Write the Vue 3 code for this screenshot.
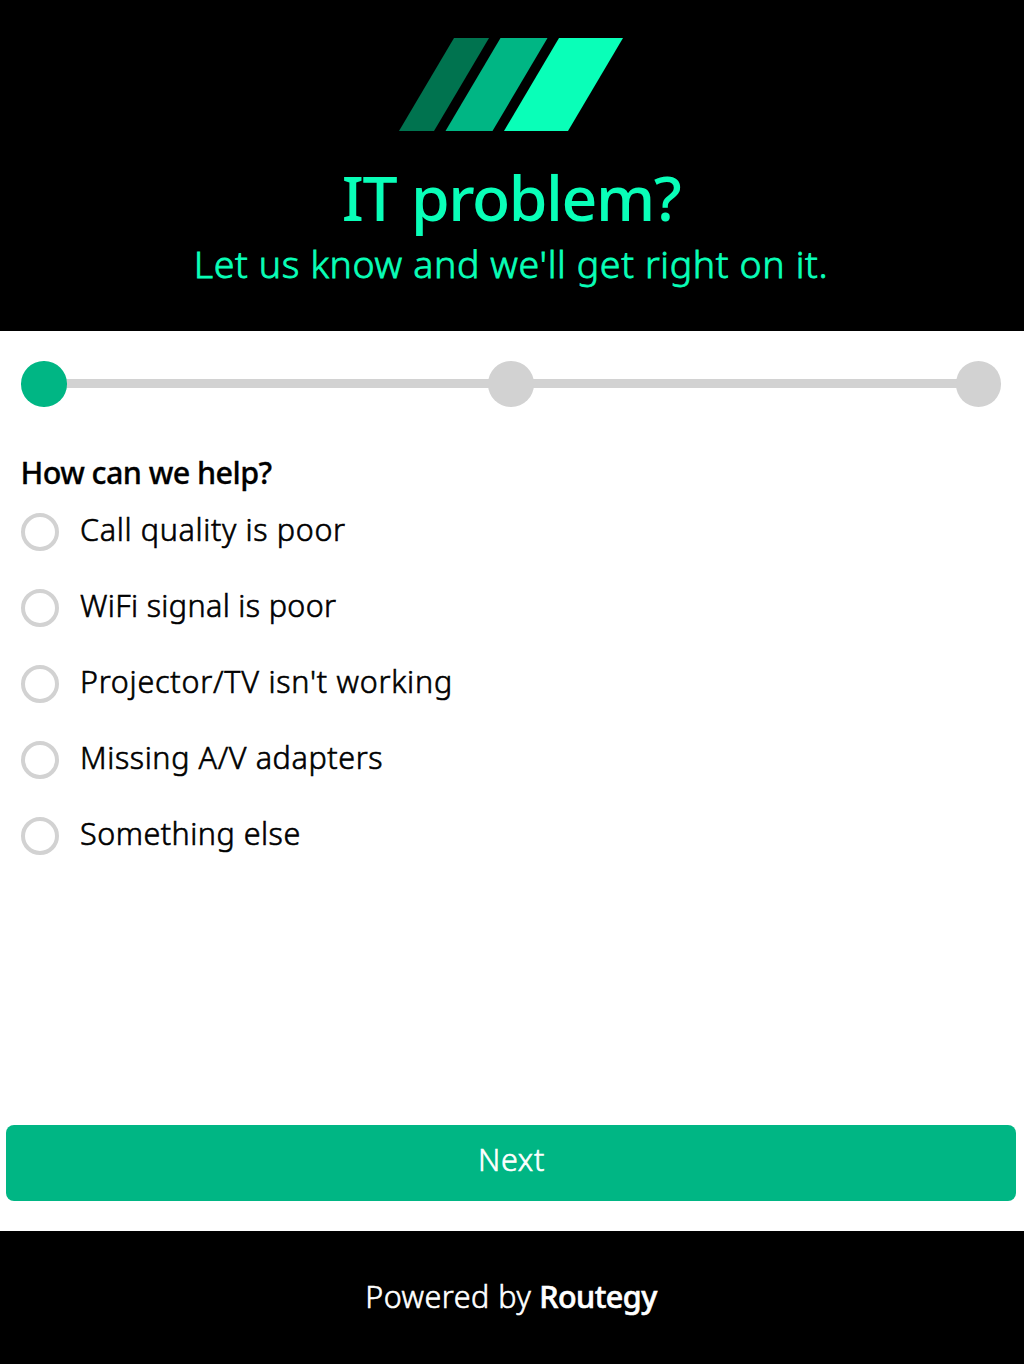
<script setup>
import { ref } from 'vue'

const steps = [1, 2, 3]
const current = ref(1)
const selected = ref(null)
const options = [
  { label: 'Call quality is poor', tracking: 0.65 },
  { label: 'WiFi signal is poor', tracking: 0.34 },
  { label: "Projector/TV isn't working", tracking: 0.75 },
  { label: 'Missing A/V adapters', tracking: 0.59 },
  { label: 'Something else', tracking: 0.49 }
]
</script>

<template>
  <div class="page">
    <header class="header">
      <svg class="logo" width="224" height="93" viewBox="0 0 224 93">
        <polygon points="0,93 55,0 90,0 35,93" fill="#00734f" />
        <polygon points="46.5,93 101.5,0 148.5,0 93.5,93" fill="#00b684" />
        <polygon points="105,93 160,0 224,0 169,93" fill="#09ffb8" />
      </svg>
      <h1>IT problem?</h1>
      <p>Let us know and we'll get right on it.</p>
    </header>

    <main class="content">
      <div class="steps">
        <template v-for="step in steps" :key="step">
          <span v-if="step > 1" class="bar"></span>
          <span class="dot" :class="{ active: step === current }"></span>
        </template>
      </div>
      <h2>How can we help?</h2>
      <div class="options">
        <label v-for="option in options" :key="option.label">
          <input v-model="selected" type="radio" name="issue" :value="option.label" />
          <span :style="{ letterSpacing: option.tracking + 'px' }">{{ option.label }}</span>
        </label>
      </div>
      <button type="button"><span>Next</span></button>
    </main>

    <footer class="footer">
      <span class="powered">Powered by</span>
      <strong>Routegy</strong>
    </footer>
  </div>
</template>

<style>
body {
  margin: 0;
  background: #fff;
}
</style>

<style scoped>
.page {
  display: flex;
  flex-direction: column;
  height: 1364px;
  overflow: hidden;
  box-sizing: border-box;
  font-family: "Noto Sans", sans-serif;
  font-weight: 300;
  font-size: 30.5px;
  color: #000;
  -webkit-text-stroke: 0.6px currentColor;
}
.header {
  display: flex;
  flex-direction: column;
  align-items: center;
  box-sizing: border-box;
  height: 330.5px;
  padding: 38px 2px 0 0;
  background: #000;
  color: #09ffb8;
}
.logo {
  display: block;
}
h1 {
  margin: 30px 0 0;
  font-size: 62.5px;
  font-weight: 500;
  line-height: 72px;
  letter-spacing: -1.43px;
  -webkit-text-stroke: 0;
}
.header p {
  margin: 7px 0 0;
  font-size: 37.5px;
  line-height: 48px;
  letter-spacing: 0.63px;
  -webkit-text-stroke-width: 0.8px;
}
.content {
  display: flex;
  flex: 1;
  flex-direction: column;
}
.steps {
  display: flex;
  align-items: center;
  margin: 30.5px 23px 0 21px;
}
.dot {
  width: 45.5px;
  height: 45.5px;
  border-radius: 50%;
  background: #d2d2d2;
}
.dot.active {
  background: #00b684;
}
.bar {
  flex: 1;
  height: 9px;
  margin: 0 -1px;
  background: #d2d2d2;
  position: relative;
  top: -0.5px;
  z-index: -1;
}
h2 {
  margin: 45.5px 0 0 20.5px;
  font-size: 30.5px;
  font-weight: 500;
  line-height: 40px;
  letter-spacing: -0.58px;
  -webkit-text-stroke-width: 0.3px;
}
.options {
  display: flex;
  flex-direction: column;
  gap: 38px;
  margin: 21px 0 0 21px;
}
label {
  display: flex;
  gap: 21px;
  height: 38px;
  line-height: 33px;
}
input {
  appearance: none;
  box-sizing: border-box;
  width: 38px;
  height: 38px;
  margin: 0;
  border: 4px solid #d2d2d2;
  border-radius: 50%;
}
input:checked {
  border-color: #00b684;
}
button {
  height: 76px;
  margin: auto 8px 30px 6px;
  padding: 0 0 8px 1px;
  border: 0;
  border-radius: 8px;
  background: #00b684;
  color: #fff;
  font: inherit;
  line-height: 40px;
  letter-spacing: 0.7px;
}
.footer {
  display: flex;
  justify-content: center;
  gap: 8px;
  box-sizing: border-box;
  height: 133px;
  padding: 45px 2px 0 0;
  background: #000;
  color: #fff;
  line-height: 40px;
}
.powered {
  letter-spacing: 0.5px;
}
strong {
  font-weight: 500;
  letter-spacing: -0.52px;
}
</style>
